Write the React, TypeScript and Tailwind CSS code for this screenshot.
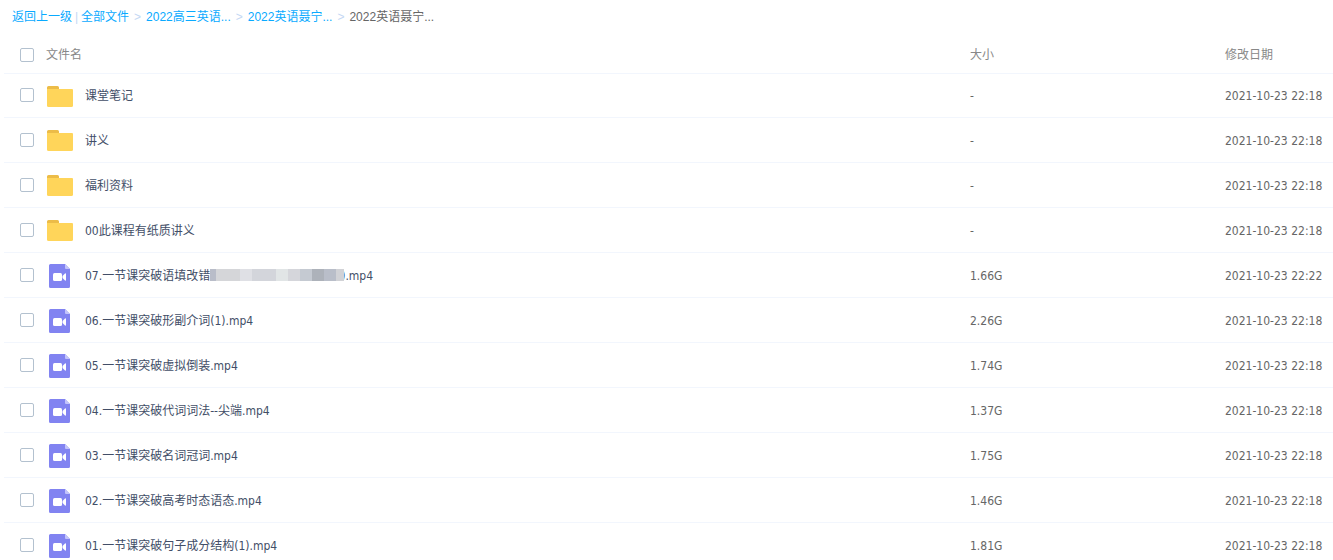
import { useState } from "react";

type FileItem = {
  name: string;
  suffix?: string;
  type: "folder" | "video";
  size: string;
  date: string;
};

const crumbs = ["全部文件", "2022高三英语...", "2022英语聂宁..."];

const files: FileItem[] = [
  { name: "课堂笔记", type: "folder", size: "-", date: "2021-10-23 22:18" },
  { name: "讲义", type: "folder", size: "-", date: "2021-10-23 22:18" },
  { name: "福利资料", type: "folder", size: "-", date: "2021-10-23 22:18" },
  { name: "00此课程有纸质讲义", type: "folder", size: "-", date: "2021-10-23 22:18" },
  { name: "07.一节课突破语填改错", suffix: ").mp4", type: "video", size: "1.66G", date: "2021-10-23 22:22" },
  { name: "06.一节课突破形副介词(1).mp4", type: "video", size: "2.26G", date: "2021-10-23 22:18" },
  { name: "05.一节课突破虚拟倒装.mp4", type: "video", size: "1.74G", date: "2021-10-23 22:18" },
  { name: "04.一节课突破代词词法--尖端.mp4", type: "video", size: "1.37G", date: "2021-10-23 22:18" },
  { name: "03.一节课突破名词冠词.mp4", type: "video", size: "1.75G", date: "2021-10-23 22:18" },
  { name: "02.一节课突破高考时态语态.mp4", type: "video", size: "1.46G", date: "2021-10-23 22:18" },
  { name: "01.一节课突破句子成分结构(1).mp4", type: "video", size: "1.81G", date: "2021-10-23 22:18" },
];

const checkboxClass =
  "block size-[14px] shrink-0 appearance-none rounded-xs border border-[#b3c1cf] bg-white checked:border-[#09aaff] checked:bg-[#09aaff]";

function FolderIcon() {
  return (
    <svg width="26" height="21" viewBox="0 0 26 21" aria-hidden="true">
      <path d="M0 1.5A1.5 1.5 0 0 1 1.500 0H10.500A1.500 1.500 0 0 1 12 1.500V6H0Z" fill="#ecbc48" />
      <path d="M0 3H25A1 1 0 0 1 26 4V19.500A1.500 1.500 0 0 1 24.500 21H1.500A1.500 1.500 0 0 1 0 19.500Z" fill="#ffd55a" />
    </svg>
  );
}

function VideoIcon() {
  return (
    <svg width="21" height="24" viewBox="0 0 21 24" aria-hidden="true">
      <path d="M1.500 0H16L21 5V22.500A1.500 1.500 0 0 1 19.500 24H1.500A1.500 1.500 0 0 1 0 22.500V1.500A1.500 1.500 0 0 1 1.500 0Z" fill="#8183f1" />
      <path d="M16 0L21 5H17A1 1 0 0 1 16 4Z" fill="#c3c4fa" />
      <rect x="4" y="9" width="9" height="8" rx="1.500" fill="#fff" />
      <path d="M13.500 12L16 9.500Q17 9 17 10V16Q17 17 16 16.500L13.500 14Z" fill="#fff" />
    </svg>
  );
}

// Che phần tên nhạy cảm
function Mosaic() {
  return (
    <span className="relative -mr-[3px] flex h-3 w-[134px]" aria-hidden="true">
      <span className="w-[6px] bg-[#b9bdc9]" />
      <span className="w-6 bg-[#d5d6d9]" />
      <span className="w-3 bg-[#dfe0e5]" />
      <span className="w-6 bg-[#d3d5db]" />
      <span className="w-3 bg-[#e1e5e6]" />
      <span className="w-3 bg-[#d5d6db]" />
      <span className="w-3 bg-[#c5cad2]" />
      <span className="w-3 bg-[#adb2ba]" />
      <span className="w-3 bg-[#b9bec9]" />
      <span className="flex-1 bg-[#d1d2d6]" />
    </span>
  );
}

export default function App() {
  const [selected, setSelected] = useState<string[]>([]);

  const toggle = (name: string) => {
    setSelected(selected.includes(name) ? selected.filter((n) => n !== name) : [...selected, name]);
  };

  const toggleAll = () => {
    setSelected(selected.length === files.length ? [] : files.map((f) => f.name));
  };

  return (
    <div className="h-screen overflow-hidden bg-white text-xs text-[#424e67]">
      <nav className="flex h-9 items-center pb-0.5 pl-3 font-['Liberation_Sans','Noto_Sans_CJK_SC',sans-serif] text-[#09aaff]">
        <a href="#back">返回上一级</a>
        <span className="w-[9px] text-center text-[#c4d8f4]">|</span>
        {crumbs.map((crumb) => (
          <span key={crumb} className="flex">
            <a href="#dir">{crumb}</a>
            <span className="w-[17px] text-center text-[#c4d8f4]">&gt;</span>
          </span>
        ))}
        <span className="text-[#666]">2022英语聂宁...</span>
      </nav>

      <div className="pl-1">
        <table className="w-full table-fixed font-['DejaVu_Sans_Condensed','Noto_Sans_CJK_SC',sans-serif]">
          <thead className="text-left text-[#888]">
            <tr className="h-[37px] border-b border-[#f2f6fd]">
              <th className="pt-0.5 pl-4 font-normal">
                <label className="flex items-center gap-3">
                  <input type="checkbox" className={checkboxClass} checked={selected.length === files.length} onChange={toggleAll} />
                  文件名
                </label>
              </th>
              <th className="w-[255px] pt-0.5 font-normal">大小</th>
              <th className="w-[108px] pt-0.5 font-normal">修改日期</th>
            </tr>
          </thead>
          <tbody>
            {files.map((file) => (
              <tr key={file.name} className="h-[45px] border-b border-[#f2f6fd] first:h-11">
                <td className="pl-4">
                  <label className="flex items-center">
                    <input type="checkbox" className={checkboxClass} checked={selected.includes(file.name)} onChange={() => toggle(file.name)} />
                    <span className="mx-3 flex w-[27px] justify-center pt-0.5">
                      {file.type === "folder" ? <FolderIcon /> : <VideoIcon />}
                    </span>
                    <span className="pt-0.5">{file.name}</span>
                    {file.suffix && (
                      <>
                        <Mosaic />
                        <span className="pt-0.5">{file.suffix}</span>
                      </>
                    )}
                  </label>
                </td>
                <td className="pt-0.5 text-[#666]">{file.size}</td>
                <td className="pt-0.5 whitespace-nowrap text-[#666]">{file.date}</td>
              </tr>
            ))}
          </tbody>
        </table>
      </div>
    </div>
  );
}
